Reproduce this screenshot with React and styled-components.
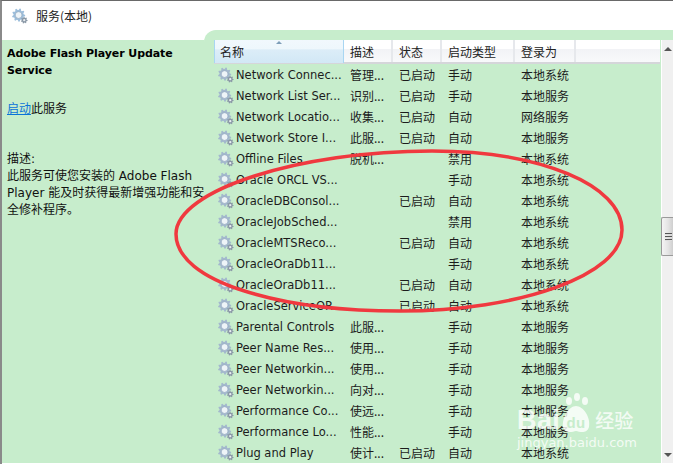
import React from "react";
import styled, { createGlobalStyle } from "styled-components";

const Global = createGlobalStyle`
  html, body { margin: 0; padding: 0; background: #fff; }
  body { font-family: "DejaVu Sans", "Noto Sans CJK SC", sans-serif; }
`;

const Window = styled.div`
  position: relative;
  width: 673px;
  height: 464px;
  overflow: hidden;
  box-sizing: border-box;
  border-top: 1px solid #696969;
  border-left: 2px solid #8a8a8a;
  background: #fff;
  display: flex;
  flex-direction: column;
`;

const TitleBar = styled.div`
  height: 29px;
  display: flex;
  align-items: center;
  gap: 8px;
  padding-left: 10px;
  font-size: 12px;
  color: #222;
  font-family: "Noto Sans CJK SC", sans-serif;
`;

const Main = styled.div`
  flex: 1;
  display: flex;
  min-height: 0;
  padding-bottom: 1px;
`;

const Side = styled.div`
  width: 202px;
  margin-top: 10px;
  background: #c7edcc;
  padding: 5px 0 0 5px;
  box-sizing: border-box;
  font-size: 12px;
  line-height: 17px;
  color: #111;
  white-space: nowrap;
`;

const SideTitle = styled.div`
  font-weight: 700;
  font-size: 11px;
  letter-spacing: -0.08px;
  color: #000;
`;

const SideAction = styled.div`
  margin-top: 20px;
  font-size: 12px;
  font-family: "Noto Sans CJK SC", sans-serif;
`;

const SideLink = styled.span`
  color: #0a72d8;
  text-decoration: underline;
`;

const SideDesc = styled.div`
  margin-top: 35px;
`;

const Content = styled.div`
  flex: 1;
  display: flex;
  background: #c7edcc;
  border-top-left-radius: 12px;
  padding: 10px 0 0 10px;
  min-width: 0;
`;

const List = styled.div`
  width: 446px;
`;

const Header = styled.div`
  display: grid;
  grid-template-columns: 130px 49px 49px 73px 61px 84px;
  height: 24px;
  box-sizing: border-box;
  border-bottom: 2px solid #d5d6da;
  background: linear-gradient(#fff 0, #fff 40%, #f2f3f6 42%, #f8f9fb 100%);
`;

const HeadCell = styled.div`
  position: relative;
  display: flex;
  align-items: center;
  padding-left: ${({ $first }) => ($first ? "5px" : "6px")};
  font-size: 12px;
  font-family: "Noto Sans CJK SC", sans-serif;
  color: #222;
  box-sizing: border-box;
  border-right: ${({ $last }) => ($last ? "none" : "2px solid #e6e8ec")};
  ${({ $first }) =>
    $first &&
    `background: linear-gradient(#f1f8fd 0, #eef7fc 40%, #dcedf8 42%, #d2e8f6 100%);
     border-left: 1px solid #a9d6f2;
     border-right: 1px solid #a9d6f2;
     margin-bottom: -1px;`}
`;

const SortMark = styled.span`
  position: absolute;
  top: 1px;
  left: 61px;
  width: 0;
  height: 0;
  border-left: 3px solid transparent;
  border-right: 3px solid transparent;
  border-bottom: 3px solid #7d9db8;
`;

const Row = styled.div`
  display: grid;
  grid-template-columns: 130px 49px 49px 73px 61px 84px;
  height: 21px;
  align-items: center;
  font-size: 12px;
  color: #1c1c1c;
  white-space: nowrap;
`;

const NameCell = styled.div`
  display: flex;
  align-items: center;
  gap: 2px;
  padding-left: 4px;
  font-size: 11.5px;
  min-width: 0;
`;

const Cell = styled.div`
  padding-left: 6px;
  font-family: "Noto Sans CJK SC", sans-serif;
`;

const Scrollbar = styled.div`
  width: 12px;
  margin-left: 1px;
  background: #f0f0f0;
  border-left: 1px solid #fff;
  display: flex;
  flex-direction: column;
  align-items: stretch;
  justify-content: space-between;
`;

const Thumb = styled.div`
  position: absolute;
  top: 216px;
  right: 0;
  width: 12px;
  height: 39px;
  box-sizing: border-box;
  border: 1px solid #9a9a9a;
  border-right: none;
  border-radius: 2px 0 0 2px;
  background: linear-gradient(90deg, #f4f4f4, #e4e4e4 55%, #cfcfcf);
  display: flex;
  flex-direction: column;
  justify-content: center;
  gap: 1px;
  padding-left: 3px;
`;

const Grip = styled.span`
  width: 7px;
  height: 1px;
  background: #555;
  border-bottom: 1px solid #ddd;
`;

const Arrow = styled.div`
  height: 17px;
  display: flex;
  align-items: center;
  justify-content: center;
  &::before {
    content: "";
    border-left: 4px solid transparent;
    border-right: 4px solid transparent;
    ${({ $down }) =>
      $down ? "border-top: 4px solid #555;" : "border-bottom: 4px solid #555;"}
  }
`;

const Annotation = styled.svg`
  position: absolute;
  left: -2px;
  top: -1px;
  pointer-events: none;
`;

const Watermark = styled.div`
  position: absolute;
  left: 515px;
  top: 391px;
  width: 124px;
  color: rgba(255, 255, 255, 0.8);
  pointer-events: none;
`;

const MarkLine = styled.div`
  display: flex;
  align-items: flex-end;
  height: 42px;
  font-family: "Liberation Sans", sans-serif;
  font-weight: 700;
  font-size: 27px;
  line-height: 28px;
  letter-spacing: 0.4px;
`;

const MarkCn = styled.span`
  font-family: "Noto Sans CJK SC", sans-serif;
  font-weight: 500;
  font-size: 19px;
  line-height: 28px;
  letter-spacing: 0;
  margin-left: 3px;
`;

const MarkUrl = styled.div`
  margin-top: 1px;
  font-size: 13px;
  line-height: 16px;
  font-family: "DejaVu Sans", sans-serif;
  white-space: nowrap;
`;

function gearPath(cx, cy, outer, inner, teeth) {
  const pts = [];
  for (let i = 0; i < teeth * 4; i++) {
    const a = (i / (teeth * 4)) * Math.PI * 2;
    const r = i % 4 < 2 ? outer : inner;
    pts.push(`${(cx + r * Math.cos(a)).toFixed(2)} ${(cy + r * Math.sin(a)).toFixed(2)}`);
  }
  return `M${pts.join("L")}Z`;
}

const bigGear = gearPath(7, 7.5, 7, 5.4, 9);
const smallGear = gearPath(13, 13, 3.6, 2.6, 7);

function GearIcon({ tone = "#a3b8cd" }) {
  return (
    <svg width={16} height={16} viewBox="0 0 17 17" style={{ flex: "none" }}>
      <path d={bigGear} fill={tone} />
      <circle cx="7" cy="7.5" r="3.6" fill="#eef4f8" stroke="#8ea5bc" strokeWidth="0.7" />
      <path d={smallGear} fill="#8a98a6" />
      <circle cx="13" cy="13" r="1.2" fill="#e8eef2" />
    </svg>
  );
}

const rows = [
  ["Network Connec...", "管理...", "已启动", "手动", "本地系统"],
  ["Network List Ser...", "识别...", "已启动", "手动", "本地服务"],
  ["Network Locatio...", "收集...", "已启动", "自动", "网络服务"],
  ["Network Store I...", "此服...", "已启动", "自动", "本地服务"],
  ["Offline Files", "脱机...", "", "禁用", "本地系统"],
  ["Oracle ORCL VS...", "", "", "手动", "本地系统"],
  ["OracleDBConsol...", "", "已启动", "自动", "本地系统"],
  ["OracleJobSched...", "", "", "禁用", "本地系统"],
  ["OracleMTSReco...", "", "已启动", "自动", "本地系统"],
  ["OracleOraDb11...", "", "", "手动", "本地系统"],
  ["OracleOraDb11...", "", "已启动", "自动", "本地系统"],
  ["OracleServiceOR...", "", "已启动", "自动", "本地系统"],
  ["Parental Controls", "此服...", "", "手动", "本地服务"],
  ["Peer Name Res...", "使用...", "", "手动", "本地服务"],
  ["Peer Networkin...", "使用...", "", "手动", "本地服务"],
  ["Peer Networkin...", "向对...", "", "手动", "本地服务"],
  ["Performance Co...", "使远...", "", "手动", "本地服务"],
  ["Performance Lo...", "性能...", "", "手动", "本地服务"],
  ["Plug and Play", "使计...", "已启动", "自动", "本地系统"],
];

export default function App() {
  return (
    <>
      <Global />
      <Window>
        <TitleBar>
          <GearIcon tone="#9dbedb" />
          服务(本地)
        </TitleBar>
        <Main>
          <Side>
            <SideTitle>
              Adobe Flash Player Update
              <br />
              Service
            </SideTitle>
            <SideAction>
              <SideLink>启动</SideLink>此服务
            </SideAction>
            <SideDesc>
              描述:
              <br />
              此服务可使您安装的 Adobe Flash
              <br />
              Player 能及时获得最新增强功能和安
              <br />
              全修补程序。
            </SideDesc>
          </Side>
          <Content>
            <List>
              <Header>
                <HeadCell $first>
                  <SortMark />
                  名称
                </HeadCell>
                <HeadCell>描述</HeadCell>
                <HeadCell>状态</HeadCell>
                <HeadCell>启动类型</HeadCell>
                <HeadCell>登录为</HeadCell>
                <HeadCell $last />
              </Header>
              {rows.map((r, i) => (
                <Row key={i}>
                  <NameCell>
                    <GearIcon />
                    {r[0]}
                  </NameCell>
                  <Cell>{r[1]}</Cell>
                  <Cell>{r[2]}</Cell>
                  <Cell>{r[3]}</Cell>
                  <Cell>{r[4]}</Cell>
                </Row>
              ))}
            </List>
            <Scrollbar>
              <Arrow />
              <Arrow $down />
            </Scrollbar>
          </Content>
        </Main>
        <Thumb>
          <Grip />
          <Grip />
          <Grip />
        </Thumb>
        <Annotation width="673" height="464" viewBox="0 0 673 464">
          <path
            d="M176 234C176 190 300 151 432 151C540 151 622 185 622 230C622 275 520 311 400 311C280 311 176 282 176 234Z"
            fill="none"
            stroke="#f0393f"
            strokeWidth="3.5"
          />
        </Annotation>
        <Watermark>
          <MarkLine>
            Bai
            <svg width="32" height="42" viewBox="0 0 32 42" style={{ flex: "none" }}>
              <ellipse cx="9" cy="9" rx="3" ry="4" fill="currentColor" />
              <ellipse cx="17" cy="5" rx="3" ry="4" fill="currentColor" />
              <ellipse cx="25" cy="9" rx="3" ry="4" fill="currentColor" />
              <path d="M16 14C23 14 31 25 29 35C27 42 20 40 16 39C12 40 5 42 3 35C2 25 9 14 16 14Z" fill="currentColor" />
              <text x="16" y="36" textAnchor="middle" fontSize="15" fontWeight="700" fill="#c7edcc" fontFamily="Liberation Sans, sans-serif">du</text>
            </svg>
            <MarkCn>经验</MarkCn>
          </MarkLine>
          <MarkUrl>jingyan.baidu.com</MarkUrl>
        </Watermark>
      </Window>
    </>
  );
}
